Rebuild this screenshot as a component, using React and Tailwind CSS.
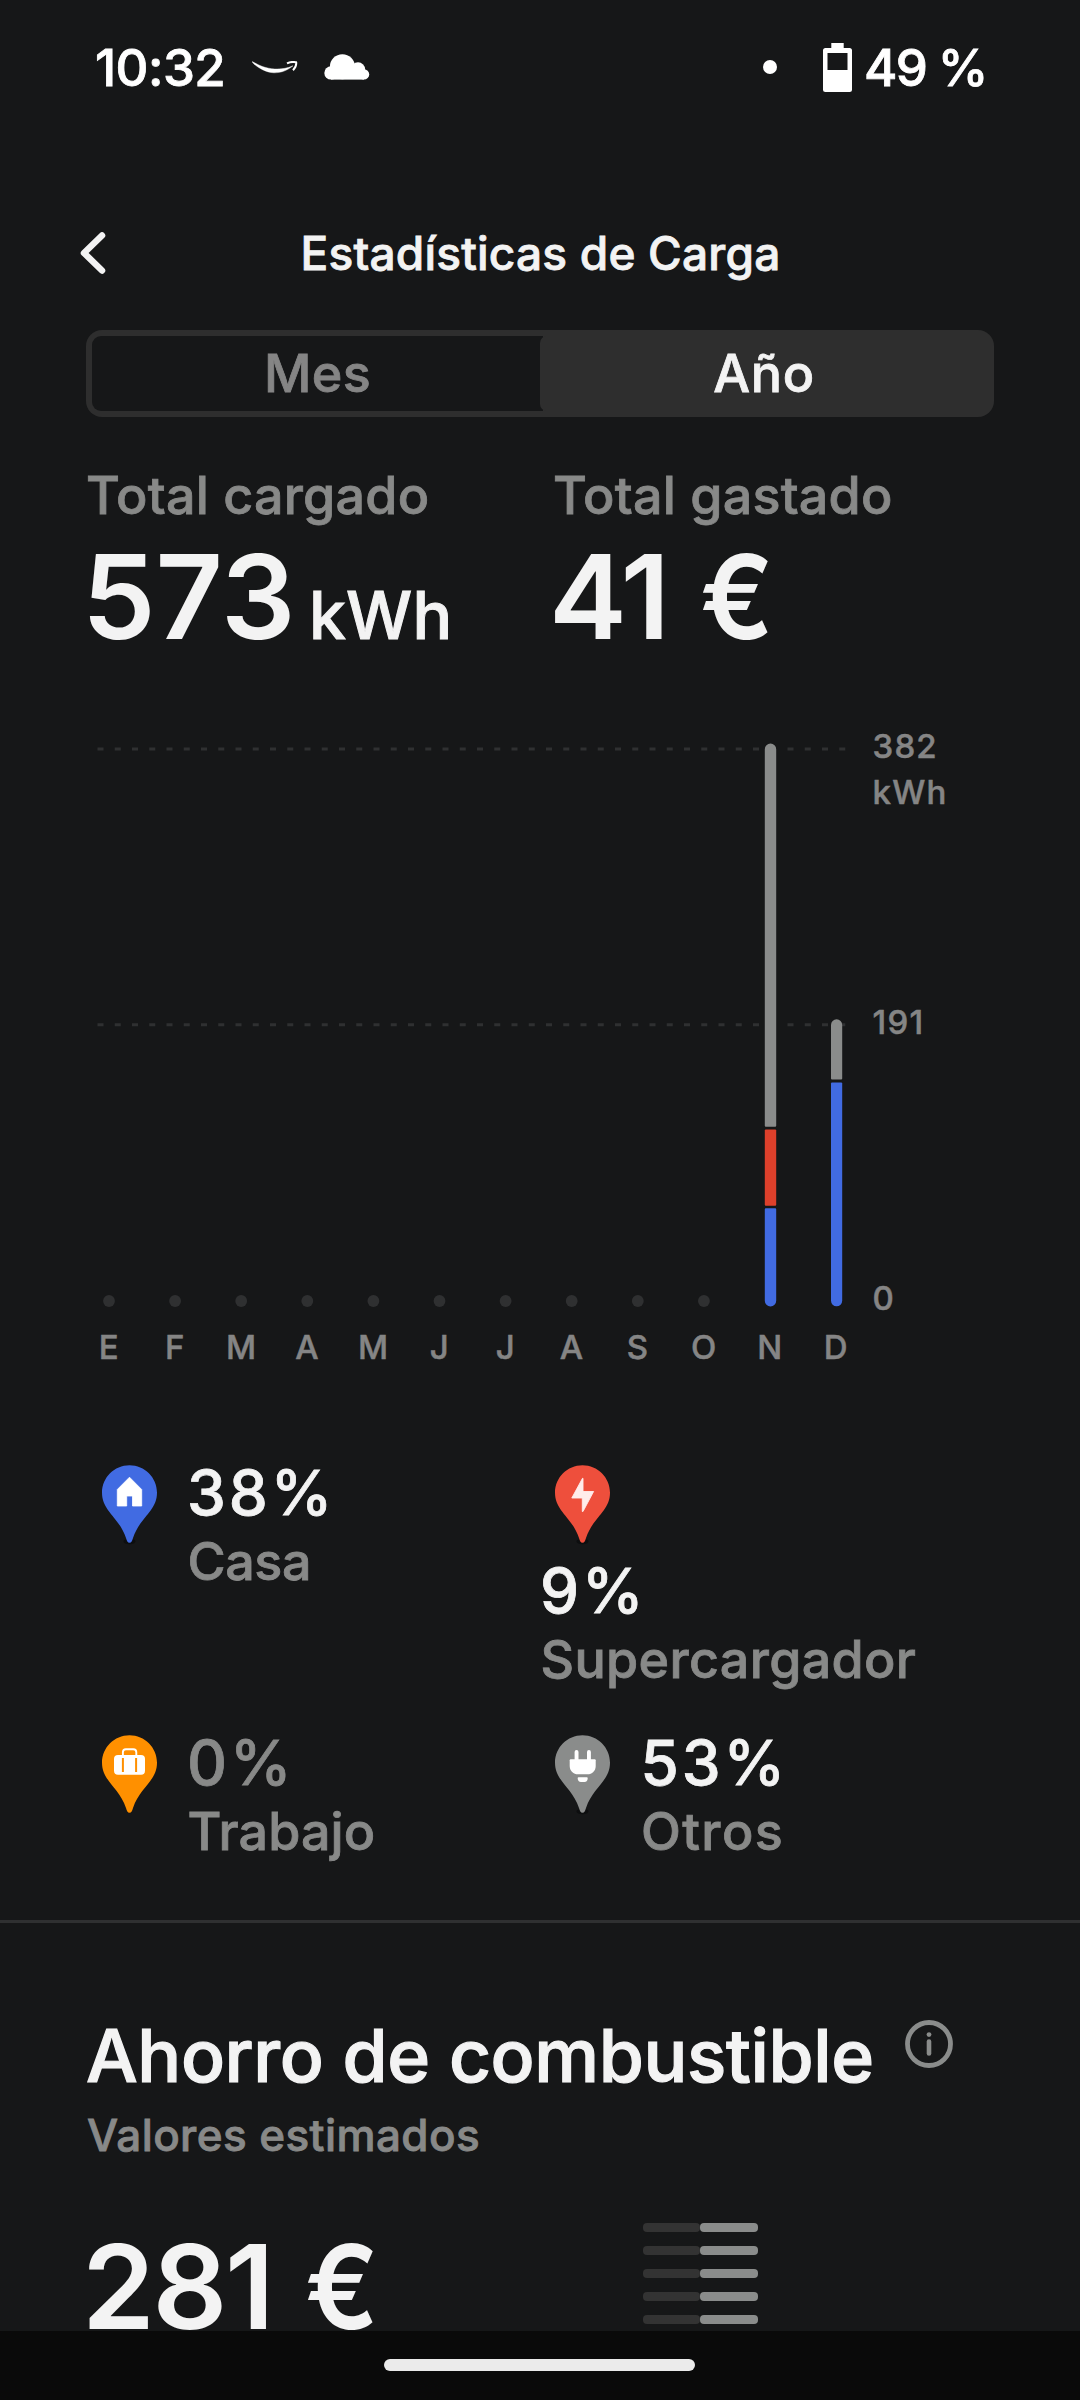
const MONTHS = ["E", "F", "M", "A", "M", "J", "J", "A", "S", "O", "N", "D"];

function StatusBar() {
  return (
    <div className="flex h-[134px] shrink-0 items-center pl-[95px] pr-[93px] text-white">
      <span className="w-[130px] text-[51px] leading-none tracking-[-0.550px]">10:32</span>
      <svg className="ml-[27px] h-[13px] w-[46px]" viewBox="0 0 46 13" fill="none">
        <path d="M0.3 0.6C0 2.4 12 11.8 22 11.8C30 11.8 36 9 41 4.8C35 7.4 29 8.3 23 8C13 7.500 6 3.800 0.3 0.6Z" fill="#fff" stroke="#fff" strokeWidth="0.400" />
        <path d="M35 2.4C38 0.9 42 0.8 44.2 1.3C44.5 4 43.2 7 41 9.2" stroke="#fff" strokeWidth="2" strokeLinejoin="round" />
      </svg>
      <svg className="ml-[26px] h-[26px] w-[46px]" viewBox="0 0 46 26" fill="#fff">
        <circle cx="18.4" cy="12.7" r="12.5" />
        <circle cx="34" cy="15.5" r="7.2" />
        <circle cx="7" cy="18.9" r="6.7" />
        <circle cx="40" cy="20.4" r="5.2" />
        <rect x="7" y="15" width="33" height="10.6" />
      </svg>
      <span className="ml-auto size-[14px] rounded-full bg-white" />
      <svg className="ml-[46px] h-[49px] w-[29px]" viewBox="0 0 29 49">
        <path d="M8.3 0H20.7V5H26.5A2.5 2.5 0 0 1 29 7.500V46.500A2.500 2.500 0 0 1 26.500 49H2.500A2.500 2.500 0 0 1 0 46.500V7.500A2.500 2.500 0 0 1 2.500 5H8.300Z" fill="#fff" />
        <rect x="4.500" y="10" width="20" height="17" fill="#161718" />
      </svg>
      <span className="ml-[12px] w-[123px] whitespace-pre text-[51px] leading-none tracking-[-1.800px]">49 %</span>
    </div>
  );
}

function Header() {
  return (
    <header className="mt-[60px] grid h-[118px] shrink-0 grid-cols-[1fr_auto_1fr] items-center">
      <svg className="ml-[79px] h-[44px] w-[28px]" viewBox="0 0 28 44" fill="none">
        <path d="M23 4.500L5 22L23 39.500" stroke="#f3f3f3" strokeWidth="6.500" strokeLinecap="round" strokeLinejoin="round" />
      </svg>
      <h1 className="ml-[1px] text-[46px] leading-[60px] tracking-[0.200px]">Estadísticas de Carga</h1>
      <span />
    </header>
  );
}

function PeriodSwitch() {
  return (
    <div className="mx-[86px] mt-[18px] flex h-[87px] shrink-0 rounded-[16px] bg-[#2e2e2e] p-[6px] text-[52px]">
      <button className="flex w-[451px] items-center justify-center rounded-l-[9px] bg-[#161718] leading-none tracking-[0.400px] text-[#858585]">Mes</button>
      <button className="-ml-[3px] flex w-[448px] items-center justify-center rounded-l-[7px] bg-[#2e2e2e] leading-none tracking-[0.600px]">Año</button>
    </div>
  );
}

function Totals() {
  return (
    <div className="mt-[49px] flex shrink-0 whitespace-pre">
      <div className="w-[467px] pl-[86px]">
        <div className="text-[52px] leading-[60px] tracking-[0.240px] text-[#888988]">Total cargado</div>
        <div className="-ml-[4px] mt-[5px] flex h-[131px] items-baseline">
          <span className="text-[117px] font-semibold leading-[131px] [-webkit-text-stroke:0px]">573</span>
          <span className="ml-[13.500px] text-[66px] leading-none tracking-[0.200px] [-webkit-text-stroke:1px]">kWh</span>
        </div>
      </div>
      <div className="pl-[82px]">
        <div className="ml-[4px] text-[52px] leading-[60px] tracking-[0.240px] text-[#888988]">Total gastado</div>
        <div className="mt-[5px] flex text-[117px] font-semibold leading-[131px] tracking-[-2.700px] [-webkit-text-stroke:0px]">
          <span>41</span>
          <span className="ml-[32.700px] origin-left scale-x-[0.930]">€</span>
        </div>
      </div>
    </div>
  );
}

function Chart() {
  return (
    <div className="mt-[61px] flex shrink-0 pl-[76px] text-[33px] text-[#858585] [-webkit-text-stroke:0.500px]">
      <div className="w-[796.500px]">
        <svg className="block h-[601px] w-[796px]" viewBox="76 723 796 601">
          <g stroke="#2f3031" strokeWidth="3" strokeDasharray="6 11.250">
            <path d="M97.500 749H846" />
            <path d="M97.500 1024.700H846" />
          </g>
          {MONTHS.slice(0, 10).map((_, i) => (
            <circle key={i} cx={109 + i * 66.1} cy="1301" r="5.900" fill="#2f3031" />
          ))}
          <rect x="763" y="742" width="15" height="566" fill="#161718" />
          <path d="M764.800 749.300A5.700 5.700 0 0 1 776.200 749.300V1125.700Q776.200 1126.700 775.200 1126.700H765.800Q764.800 1126.700 764.800 1125.700Z" fill="#8a8c8b" />
          <rect x="764.800" y="1129.500" width="11.400" height="76.300" rx="1" fill="#de402b" />
          <path d="M764.800 1209.300Q764.800 1208.300 765.800 1208.300H775.200Q776.200 1208.300 776.200 1209.300V1300.700A5.700 5.700 0 0 1 764.800 1300.700Z" fill="#416be2" />
          <path d="M831 1024.900A5.600 5.600 0 0 1 842.200 1024.900V1078.600Q842.200 1079.600 841.200 1079.600H832Q831 1079.600 831 1078.600Z" fill="#8a8c8b" />
          <path d="M831 1083.600Q831 1082.600 832 1082.600H841.200Q842.200 1082.600 842.200 1083.600V1300.700A5.600 5.600 0 0 1 831 1300.700Z" fill="#416be2" />
        </svg>
        <div className="-ml-[0.300px] flex h-[46px] text-center leading-[46px]">
          {MONTHS.map((m, i) => (
            <span key={i} className="w-[66.1px] shrink-0">{m}</span>
          ))}
        </div>
      </div>
      <div className="leading-[46px] tracking-[1.200px]">
        <div className="h-[275.800px] w-[90px]">382 kWh</div>
        <div className="h-[275.800px]">191</div>
        <div>0</div>
      </div>
    </div>
  );
}

function HomeGlyph() {
  return <path d="M27.500 12.200L39.700 24.500V41H30.500V31H24.700V41H15.300V24.500Z" fill="#fff" stroke="#fff" strokeWidth="0.800" strokeLinejoin="round" />;
}

function BoltGlyph() {
  return <path d="M28 13.300V26.500H38.600L28 46.500H27.300V33H16.800L27.500 13.300Z" fill="#ffeceb" stroke="#ffeceb" strokeWidth="0.900" strokeLinejoin="round" />;
}

function CaseGlyph() {
  return (
    <>
      <rect x="12" y="20" width="31" height="19.800" rx="4" fill="#fff" />
      <path d="M20.900 20V17.300Q20.900 14.300 23.900 14.300H31.300Q34.300 14.300 34.300 17.300V20" fill="none" stroke="#fff" strokeWidth="1.900" />
      <path d="M20.900 23V37M34.100 23V37" stroke="#ff9000" strokeWidth="2" />
    </>
  );
}

function PlugGlyph() {
  return (
    <g fill="#fff">
      <rect x="19.600" y="15" width="3.900" height="12" rx="1.900" />
      <rect x="32" y="15" width="3.900" height="12" rx="1.900" />
      <path d="M15.700 24.200H39.700Q40.700 24.200 40.700 25.200V31C40.700 36 37 39.300 32.500 39.300H23C18.500 39.300 14.700 36 14.700 31V25.200Q14.700 24.200 15.700 24.200Z" />
      <path d="M22.700 43Q22.700 42.200 23.500 42.200H31.900Q32.700 42.200 32.700 43C32.700 45.500 31.500 47 29.500 47H25.900C23.900 47 22.700 45.500 22.700 43Z" />
    </g>
  );
}

function Pin({ color, shadow, children }) {
  return (
    <svg className="ml-[15.500px] mt-[8px] h-[80px] w-[55px] shrink-0" viewBox="0 0 55 80">
      {shadow && <ellipse cx="27.500" cy="76.500" rx="6" ry="2.700" fill="#0d0e0f" />}
      <path d="M27.500 0.200C12.300 0.200 0 12.500 0 27.700C0 46 17 52 24 73C24.900 76.200 25.500 77.800 27.500 77.800C29.500 77.800 30.100 76.200 31 73C38 52 55 46 55 27.700C55 12.500 42.700 0.200 27.500 0.200Z" fill={color} />
      {children}
    </svg>
  );
}

function Source({ color, glyph, percent, label, labelTracking, muted, stacked, shadow }) {
  return (
    <div className={stacked ? "flex flex-col" : "flex"}>
      <Pin color={color} shadow={shadow}>{glyph}</Pin>
      <div className={stacked ? "ml-[0.500px] mt-[10.500px]" : "ml-[30.500px] mt-[1px]"}>
        <div className={muted ? "text-[62px] leading-[70px] tracking-[2.900px] text-[#888988]" : "text-[62px] leading-[70px] tracking-[2.900px]"}>{percent}</div>
        <div className={"ml-[0.500px] text-[52px] leading-[68px] text-[#888988] " + labelTracking}>{label}</div>
      </div>
    </div>
  );
}

function Sources() {
  return (
    <div className="mt-[87px] grid shrink-0 grid-cols-[453.500px_454px] grid-rows-[270px_193px] px-[86px]">
      <Source color="#416be2" glyph={<HomeGlyph />} percent="38%" label="Casa" labelTracking="tracking-[-0.400px]" shadow />
      <Source color="#ee4f3c" glyph={<BoltGlyph />} percent="9%" label="Supercargador" labelTracking="tracking-[0.350px]" stacked shadow />
      <Source color="#ff9000" glyph={<CaseGlyph />} percent="0%" label="Trabajo" labelTracking="tracking-[0.100px]" muted />
      <Source color="#8a8c8b" glyph={<PlugGlyph />} percent="53%" label="Otros" labelTracking="tracking-[1.400px]" shadow />
    </div>
  );
}

function Savings() {
  return (
    <section className="shrink-0 border-t-[3px] border-[#2f3031] pt-[88px]">
      <div className="flex h-[90px] pl-[86px]">
        <h2 className="w-[788px] whitespace-nowrap text-[73px] leading-[90px] tracking-[-0.390px] [-webkit-text-stroke:1.200px]">Ahorro de combustible</h2>
        <svg className="ml-[31px] mt-[8.500px] size-[48px]" viewBox="0 0 48 48" fill="none" stroke="#8a8c8b" strokeLinecap="round">
          <circle cx="24" cy="24" r="21.500" strokeWidth="4.800" />
          <path d="M24 21.500V33.500" strokeWidth="4.600" />
          <circle cx="24" cy="14.600" r="2.400" fill="#8a8c8b" stroke="none" />
        </svg>
      </div>
      <p className="ml-[87px] mt-[9px] text-[44px] leading-[50px] tracking-[0.410px] text-[#888988]">Valores estimados</p>
      <div className="mt-[63px] flex">
        <div className="mt-[20px] flex w-[562px] pl-[82px] text-[117px] font-semibold leading-[88px] tracking-[-2.400px] [-webkit-text-stroke:0px]">
          <span>281</span>
          <span className="ml-[33px] origin-left scale-x-[0.930]">€</span>
        </div>
        <div className="ml-[81px] flex flex-col gap-[14px]">
          {[0, 1, 2, 3, 4].map((i) => (
            <div key={i} className="flex h-[9px]">
              <span className="w-[57px] rounded-[4px] bg-[#333333]" />
              <span className="w-[58px] rounded-[4px] bg-[#8a8c8b]" />
            </div>
          ))}
        </div>
      </div>
    </section>
  );
}

export default function App() {
  return (
    <div className="h-[2400px] w-[1080px] overflow-hidden bg-[#161718] font-['Inter',sans-serif] font-medium text-[#f3f3f3] [-webkit-text-stroke:0.800px]">
      <main className="relative z-10 flex h-[2331px] flex-col [&_h1]:font-medium [&_h2]:font-medium">
        <StatusBar />
        <Header />
        <PeriodSwitch />
        <Totals />
        <Chart />
        <Sources />
        <Savings />
      </main>
      <nav className="flex h-[69px] bg-[#0a0a0a] pl-[384px] pt-[28px]">
        <span className="h-[12px] w-[311px] rounded-full bg-[#ebebeb]" />
      </nav>
    </div>
  );
}
